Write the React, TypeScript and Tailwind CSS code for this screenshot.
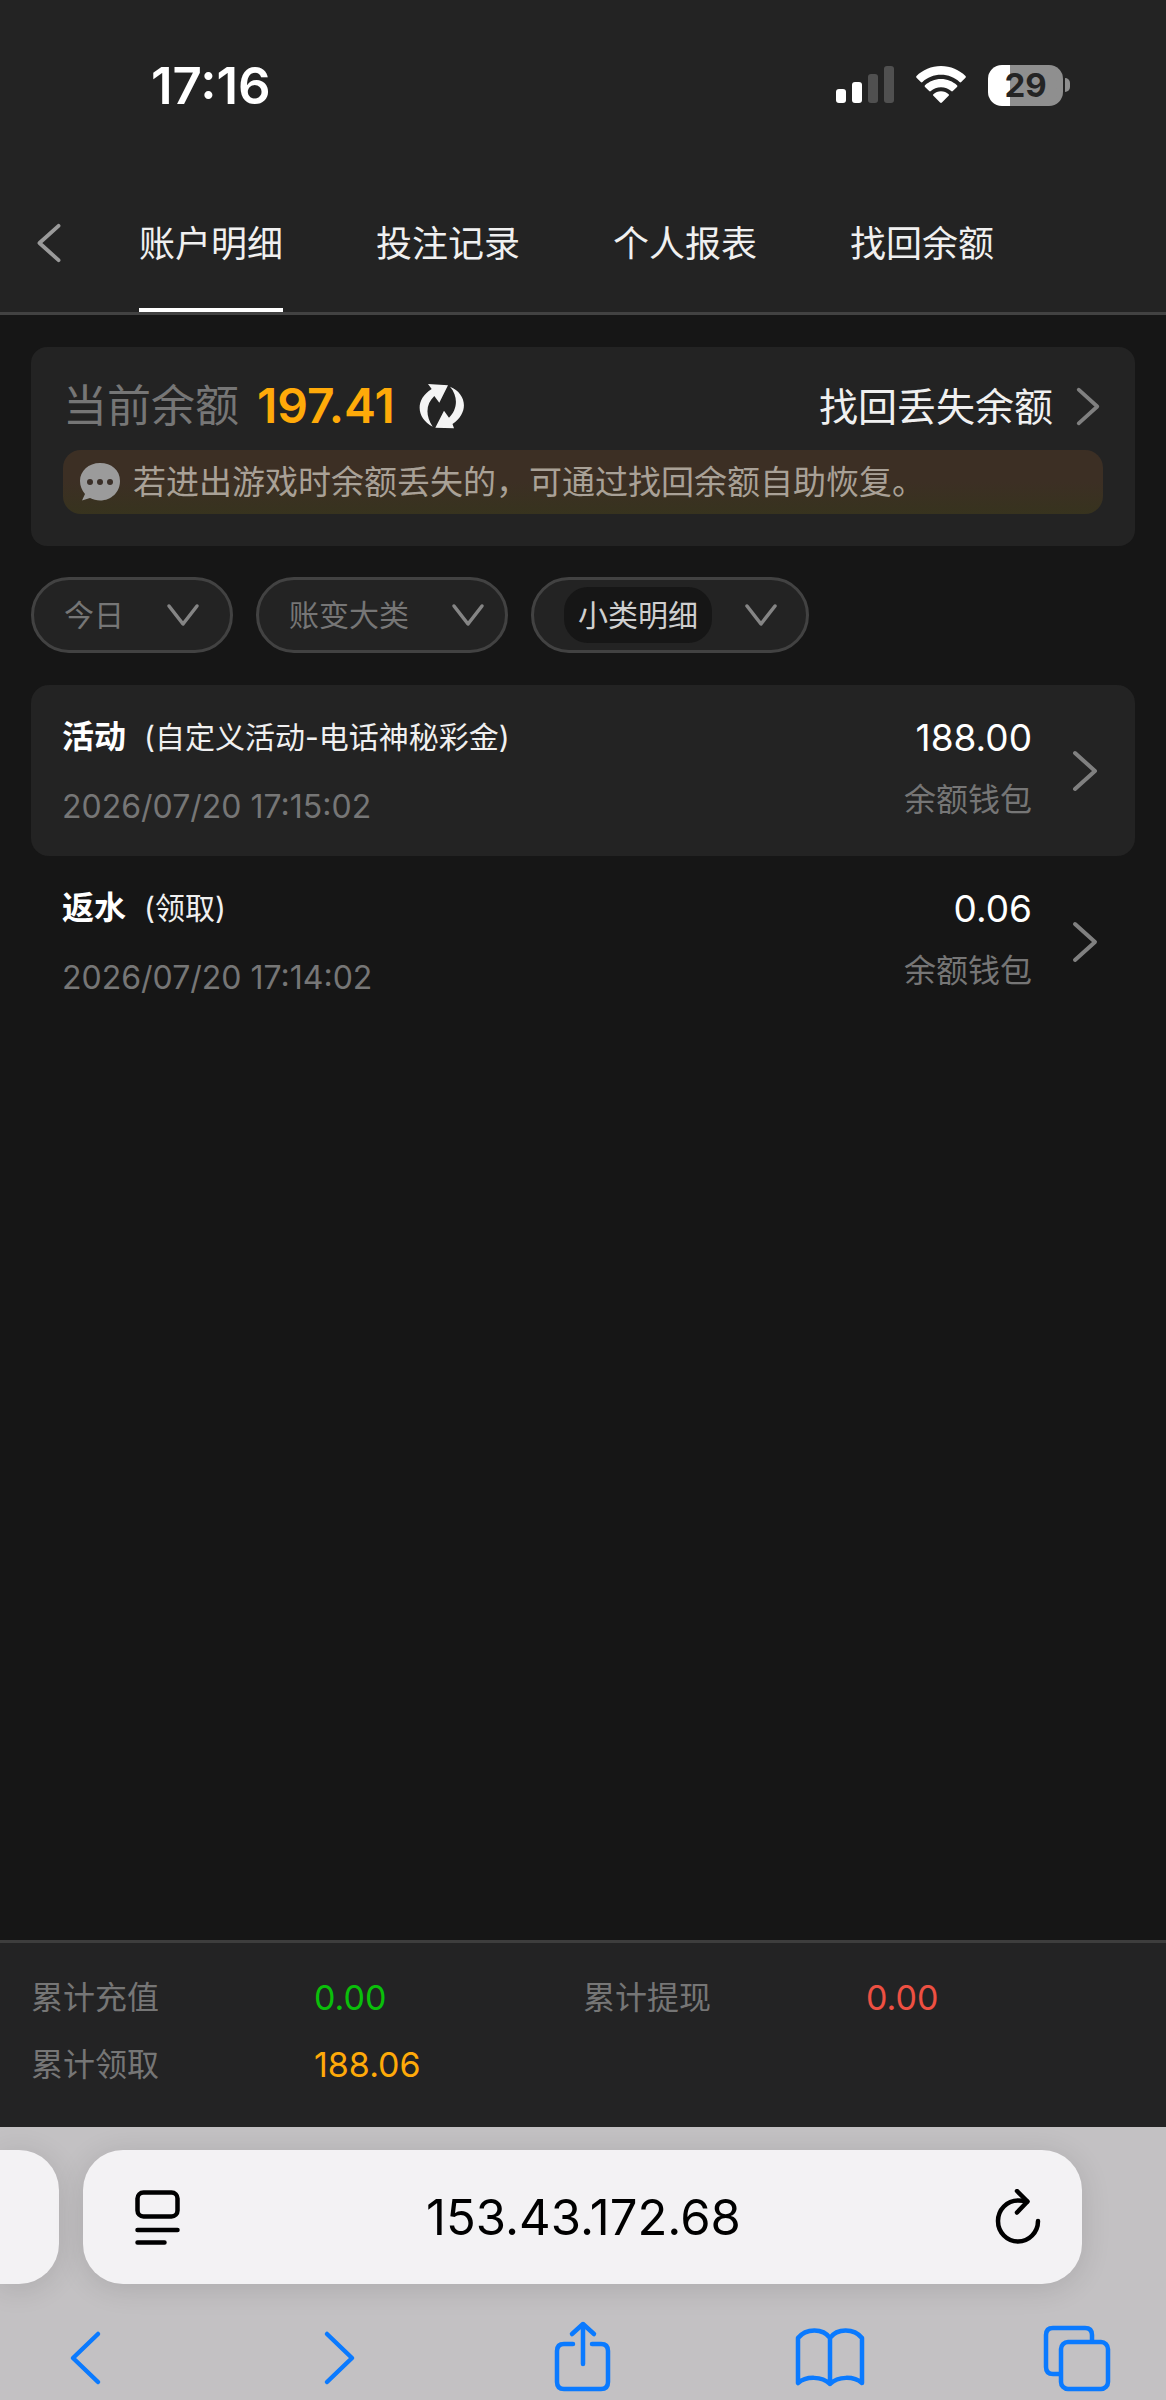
import type { ReactNode } from 'react';

const tabs = ['账户明细', '投注记录', '个人报表', '找回余额'];

const records = [
  { type: '活动', detail: '(自定义活动-电话神秘彩金)', time: '2026/07/20 17:15:02', amount: '188.00', wallet: '余额钱包' },
  { type: '返水', detail: '(领取)', time: '2026/07/20 17:14:02', amount: '0.06', wallet: '余额钱包' },
];

const totals = [
  { label: '累计充值', value: '0.00', color: 'text-[#0abf0a]' },
  { label: '累计提现', value: '0.00', color: 'text-[#ee5042]' },
  { label: '累计领取', value: '188.06', color: 'text-[#ffaa09]' },
];

const Chevron = ({ className }: { className: string }) => (
  <svg viewBox="0 0 28 44" fill="none" stroke="currentColor" strokeWidth="4" strokeLinecap="round" strokeLinejoin="round" className={className}>
    <path d="M4 4L24 22L4 40" />
  </svg>
);

const StatusBar = () => (
  <div className="flex h-[170px] items-center justify-between pl-[151px] pr-[96px]">
    <span className="text-[51px] font-semibold leading-none text-white">17:16</span>
    <div className="flex items-center gap-[22px]">
      <svg width="58" height="38" viewBox="0 0 58 38" fill="#fff">
        <rect x="0" y="23" width="10" height="14" rx="3" />
        <rect x="16" y="16" width="10" height="21" rx="3" />
        <rect x="32" y="8" width="10" height="29" rx="3" fill="#505050" />
        <rect x="48" y="0" width="10" height="37" rx="3" fill="#505050" />
      </svg>
      <svg width="50" height="38" viewBox="0 0 50 38" fill="#fff">
        <path d="M25 0C15.500 0 6.500 4 .5 10c-.5.500-.5 1.200 0 1.700l4.300 4.300c.5.500 1.200.5 1.700 0C11.200 11.500 17.800 8.800 25 8.800s13.800 2.700 18.500 7.200c.5.500 1.200.5 1.700 0l4.300-4.300c.5-.5.500-1.200 0-1.700C43.500 4 34.500 0 25 0z" />
        <path d="M25 13c-6.200 0-11.800 2.400-16 6.200-.5.500-.5 1.200 0 1.700l4.200 4.200c.4.400 1.100.500 1.600 0 2.700-2.400 6.200-3.800 10.200-3.800s7.500 1.400 10.200 3.800c.5.500 1.200.4 1.600 0l4.200-4.200c.5-.5.500-1.200 0-1.700C36.800 15.400 31.200 13 25 13z" />
        <path d="M25 25.300c-2.900 0-5.600 1.100-7.600 2.900-.5.400-.5 1.100 0 1.600l6.700 6.800c.5.500 1.300.5 1.800 0l6.700-6.800c.5-.5.500-1.200 0-1.600-2-1.800-4.700-2.900-7.600-2.900z" />
      </svg>
      <div className="flex items-center gap-[2px]">
        <div className="flex h-[41px] w-[75px] items-center justify-center rounded-[14px] bg-linear-to-r from-white from-29% to-[#8f8f8f] to-29%">
          <span className="text-[33px] font-bold leading-none text-[#242424]">29</span>
        </div>
        <div className="h-[14px] w-[5px] rounded-r-full bg-[#8f8f8f]" />
      </div>
    </div>
  </div>
);

const Header = () => (
  <nav className="flex h-[145px] items-stretch border-b-3 border-[#424242] pl-[31px] pt-1">
    <button aria-label="返回" className="mr-[72px] flex items-center text-[#9a9a9a]">
      <Chevron className="h-[42px] w-[36px] rotate-180" />
    </button>
    <div className="flex gap-[93px]">
      {tabs.map((tab, index) => (
        <button
          key={tab}
          className={`border-b-4 pt-1.5 text-[36px] leading-none text-[#f0f0f0] ${index === 0 ? 'border-white' : 'border-transparent'}`}
        >
          {tab}
        </button>
      ))}
    </div>
  </nav>
);

const BalanceCard = () => (
  <section className="rounded-[16px] bg-[#232323] px-8 pb-8 pt-[31px]">
    <div className="mb-4 flex h-14 items-center">
      <span className="text-[44px] leading-none text-[#767676]">当前余额</span>
      <span className="ml-[18px] text-[48px] font-semibold leading-none text-[#ffaa09]">197.41</span>
      <button aria-label="刷新" className="ml-6">
        <svg width="46" height="46" viewBox="0 0 46 46" fill="#f4f4f4">
          <path d="M9 1L29 2.300L20.300 19.700L15.300 13C7 21 6 32 13.700 43.700C-2 36-5 17 12.700 6z" />
          <path d="M35 45.300L16.300 44.700L25 27.700L30 34.700C38 27 40 14 31 3.700C47 10 51 29 33.500 41z" />
        </svg>
      </button>
      <a href="#recover" className="ml-auto flex items-center gap-5 text-[39px] leading-none text-[#f0f0f0]">
        找回丢失余额
        <Chevron className="h-[41px] w-[30px] text-[#808080]" />
      </a>
    </div>
    <p className="flex h-16 items-center gap-3 rounded-[18px] bg-linear-to-b from-[#3c2f24] from-50% to-[#37331e] px-4 text-[33px] leading-none text-[#a9a197]">
      <svg width="42" height="38" viewBox="0 0 42 38">
        <path d="M21 0C9.500 0 1 8 1 18c0 5 2 9.500 5 13l-3 6.500 8-2.500c3 1.600 6.500 2.500 10 2.500 11.500 0 20-8.500 20-19.500S32.500 0 21 0z" fill="#9b9b9b" />
        <circle cx="11" cy="19" r="3" fill="#3b3029" />
        <circle cx="21" cy="19" r="3" fill="#3b3029" />
        <circle cx="31" cy="19" r="3" fill="#3b3029" />
      </svg>
      若进出游戏时余额丢失的，可通过找回余额自助恢复。
    </p>
  </section>
);

const Filter = ({ label, className, selectClassName }: { label: string; className: string; selectClassName: string }) => (
  <div className={`flex h-[76px] items-center justify-between rounded-full border-3 border-[#424242] bg-[#232323] ${className}`}>
    <select aria-label={label} className={`appearance-none text-[30px] leading-none ${selectClassName}`}>
      <option>{label}</option>
    </select>
    <svg width="34" height="24" viewBox="0 0 34 24" fill="none" stroke="#858585" strokeWidth="3.500" strokeLinecap="round" strokeLinejoin="round" className="pointer-events-none">
      <path d="M3 3L17 21L31 3" />
    </svg>
  </div>
);

const RecordList = () => (
  <ul>
    {records.map((record) => (
      <li key={record.time} className="rounded-[18px] odd:bg-[#232323]">
        <a href="#detail" className="flex h-[171px] items-center px-[31px] text-[32px] leading-none text-[#767676]">
          <div className="flex flex-1 flex-col gap-[38px]">
            <div className="flex items-center gap-[18px] text-white">
              <b>{record.type}</b>
              <span className="text-[30px] leading-[34px] text-[#f0f0f0]">{record.detail}</span>
            </div>
            <time className="leading-[30px]">{record.time}</time>
          </div>
          <div className="flex flex-col items-end gap-[28px] pb-1.5 pr-[38px]">
            <span className="text-[37px] text-white">{record.amount}</span>
            <span>{record.wallet}</span>
          </div>
          <Chevron className="mr-1 h-[44px] w-[30px] text-[#808080]" />
        </a>
      </li>
    ))}
  </ul>
);

const Totals = () => (
  <dl className="grid grid-cols-2 gap-y-[27px] border-t-3 border-[#3d3d3d] bg-[#232324] px-[31px] pb-[42px] pt-[35px]">
    {totals.map((total) => (
      <div key={total.label} className="flex h-10 items-center leading-none">
        <dt className="w-[283px] text-[32px] text-[#767676]">{total.label}</dt>
        <dd className={`text-[34px] ${total.color}`}>{total.value}</dd>
      </div>
    ))}
  </dl>
);

const ToolbarButton = ({ label, children }: { label: string; children: ReactNode }) => (
  <button aria-label={label}>
    <svg width="72" height="76" viewBox="0 0 72 76" fill="none" stroke="#0a7aff" strokeWidth="4.500" strokeLinecap="round" strokeLinejoin="round">
      {children}
    </svg>
  </button>
);

const BrowserBar = () => (
  <footer className="h-[273px] overflow-hidden bg-[#c3c1c3] pt-[23px]">
    <div className="flex h-[134px] gap-6">
      <div className="w-[59px] rounded-r-[40px] bg-[#f3f2f4] shadow-[0_4px_30px_rgba(0,0,0,0.12)]" />
      <div className="mr-[84px] flex flex-1 items-center rounded-[40px] bg-[#f3f2f4] pl-[50px] pr-[40px] shadow-[0_4px_30px_rgba(0,0,0,0.12)]">
        <button aria-label="页面菜单">
          <svg width="50" height="56" viewBox="0 0 50 56" fill="none" stroke="#000" strokeWidth="4.500" strokeLinecap="round">
            <rect x="4.500" y="3.500" width="40" height="24" rx="6" />
            <path d="M4.500 41H44.500M4.500 53.500H31.500" />
          </svg>
        </button>
        <input aria-label="网址" defaultValue="153.43.172.68" className="mr-2 min-w-0 flex-1 bg-transparent text-center text-[49px] leading-none text-black outline-none" />
        <button aria-label="重新加载">
          <svg width="50" height="56" viewBox="0 0 50 56" fill="none" stroke="#000" strokeWidth="4.500" strokeLinecap="round" strokeLinejoin="round">
            <path d="M46 32A20 20.500 0 1 1 26 11.500C29 11.500 32 11.600 35 12.500" />
            <path d="M25 2L35.500 12.500L25 23.500" />
          </svg>
        </button>
      </div>
    </div>
    <div className="flex items-center justify-between px-[53px] pt-[36px]">
      <ToolbarButton label="后退">
        <path d="M45 14L20 38L45 62" />
      </ToolbarButton>
      <ToolbarButton label="前进">
        <path d="M27 14L52 38L27 62" />
      </ToolbarButton>
      <ToolbarButton label="分享">
        <path d="M26 24H17Q10 24 10 31V62Q10 69 17 69H54Q61 69 61 62V31Q61 24 54 24H45" />
        <path d="M36 44V4M25 14L36 4L47 14" />
      </ToolbarButton>
      <ToolbarButton label="书签">
        <path d="M4 18C12 8 29 8 36 18C43 8 60 8 68 18V63C60 56 44 56 36 64C28 56 12 56 4 63ZM36 18V64" />
      </ToolbarButton>
      <ToolbarButton label="标签页">
        <path d="M19 54H12Q5 54 5 47V15Q5 8 12 8H44Q51 8 51 15V21" />
        <rect x="20" y="22" width="47" height="47" rx="7" />
      </ToolbarButton>
    </div>
  </footer>
);

export default function App() {
  return (
    <div className="flex min-h-screen flex-col bg-[#161616] font-['Inter','Noto_Sans_CJK_SC',sans-serif]">
      <header className="bg-[#232323]">
        <StatusBar />
        <Header />
      </header>
      <main className="flex-1 px-[31px] pt-8">
        <BalanceCard />
        <div className="mb-8 mt-[31px] flex gap-[23px]">
          <Filter label="今日" className="w-[202px] pr-[30px]" selectClassName="ml-[30px] text-[#767676]" />
          <Filter label="账变大类" className="w-[252px] pr-[20px]" selectClassName="ml-[30px] text-[#767676]" />
          <Filter label="小类明细" className="w-[278px] pr-[28px]" selectClassName="ml-[30px] h-14 rounded-[24px] bg-[#161616] px-[14px] text-[#cfcfcf]" />
        </div>
        <RecordList />
      </main>
      <Totals />
      <BrowserBar />
    </div>
  );
}
